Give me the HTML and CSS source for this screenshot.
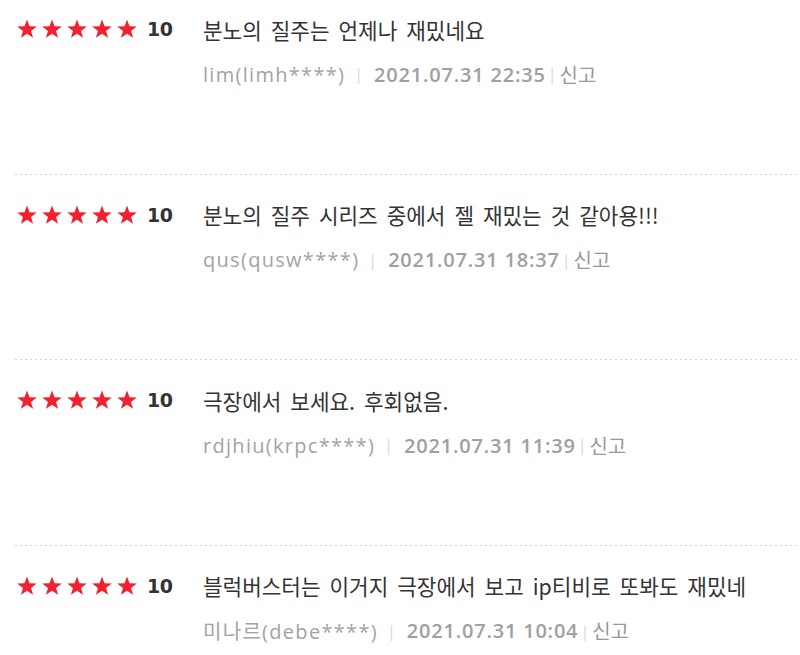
FILE: index.html
```html
<!DOCTYPE html>
<html lang="ko">
<head>
  <meta charset="UTF-8" />
  <title>관람평</title>
  <link rel="stylesheet" href="styles.css">
</head>
<body>
  <ul class="reviews">
    <li class="review">
      <div class="top">
        <svg class="stars" width="122" height="20" viewBox="0 0 122 20"><use href="#five"/></svg>
        <span class="score">10</span>
        <p class="text">분노의 질주는 언제나 재밌네요</p>
      </div>
      <div class="meta">
        <span class="user">lim(limh****)</span>
        <span class="bar wide">|</span>
        <span class="date">2021.07.31 22:35</span>
        <span class="bar">|</span>
        <a class="report">신고</a>
      </div>
    </li>
    <li class="review">
      <div class="top">
        <svg class="stars" width="122" height="20" viewBox="0 0 122 20"><use href="#five"/></svg>
        <span class="score">10</span>
        <p class="text">분노의 질주 시리즈 중에서 젤 재밌는 것 같아용!!!</p>
      </div>
      <div class="meta">
        <span class="user">qus(qusw****)</span>
        <span class="bar wide">|</span>
        <span class="date">2021.07.31 18:37</span>
        <span class="bar">|</span>
        <a class="report">신고</a>
      </div>
    </li>
    <li class="review">
      <div class="top">
        <svg class="stars" width="122" height="20" viewBox="0 0 122 20"><use href="#five"/></svg>
        <span class="score">10</span>
        <p class="text">극장에서 보세요. 후회없음.</p>
      </div>
      <div class="meta">
        <span class="user">rdjhiu(krpc****)</span>
        <span class="bar wide">|</span>
        <span class="date">2021.07.31 11:39</span>
        <span class="bar">|</span>
        <a class="report">신고</a>
      </div>
    </li>
    <li class="review">
      <div class="top">
        <svg class="stars" width="122" height="20" viewBox="0 0 122 20"><use href="#five"/></svg>
        <span class="score">10</span>
        <p class="text">블럭버스터는 이거지 극장에서 보고 ip티비로 또봐도 재밌네</p>
      </div>
      <div class="meta">
        <span class="user">미나르(debe****)</span>
        <span class="bar wide">|</span>
        <span class="date">2021.07.31 10:04</span>
        <span class="bar">|</span>
        <a class="report">신고</a>
      </div>
    </li>
  </ul>

  <!-- shared star row -->
  <svg width="0" height="0" class="defs">
    <defs>
      <polygon id="star" points="10,0.6 12.5,7.3 19.8,7.4 14,11.9 16.1,18.8 10,14.7 3.9,18.8 6,11.9 0.2,7.4 7.5,7.3"/>
      <g id="five" fill="#f3202f">
        <use href="#star" x="0"/>
        <use href="#star" x="25"/>
        <use href="#star" x="50"/>
        <use href="#star" x="75"/>
        <use href="#star" x="100"/>
      </g>
    </defs>
  </svg>
</body>
</html>
```

FILE: styles.css
```css
body {
  margin: 0;
  background: #fff;
  font-family: "Noto Sans CJK KR", "Noto Sans", sans-serif;
  color: #333;
}
.defs {
  position: absolute;
}
.reviews {
  list-style: none;
  margin: 0 0 0 15px;
  padding: 0;
}
.review {
  padding: 26px 0 86.5px;
  background-image: repeating-linear-gradient(to right, #d4d4d4 0 2px, transparent 2px 5px);
  background-size: 100% 1px;
  background-repeat: no-repeat;
  background-position: left top;
}
.review:first-child {
  padding-top: 14px;
  background-image: none;
}
.top {
  display: flex;
  align-items: center;
  height: 30px;
}
.stars {
  display: block;
  flex: none;
  margin-left: 2px;
}
.score {
  width: 56px;
  margin-left: 8px;
  font-family: "DejaVu Sans", sans-serif;
  font-weight: bold;
  font-size: 19px;
  letter-spacing: -0.5px;
  color: #333;
}
.text {
  margin: 0;
  font-size: 21.3px;
  word-spacing: 3px;
  color: #333;
}
.meta {
  display: flex;
  align-items: center;
  height: 26px;
  margin-top: 17px;
  padding-left: 188px;
  font-family: "Open Sans", "Noto Sans CJK KR", sans-serif;
  font-size: 20px;
  color: #a3a3a3;
}
.user {
  letter-spacing: 1.3px;
}
.bar {
  color: #d8d8d8;
  font-size: 16px;
  margin: 0 3px 0 2px;
}
.bar.wide {
  margin: 0 11px 0 9px;
}
.date {
  font-weight: 600;
  letter-spacing: 0.8px;
  color: #a0a0a0;
}
.report {
  font-family: "Noto Sans CJK KR", sans-serif;
  color: #999;
}
```
